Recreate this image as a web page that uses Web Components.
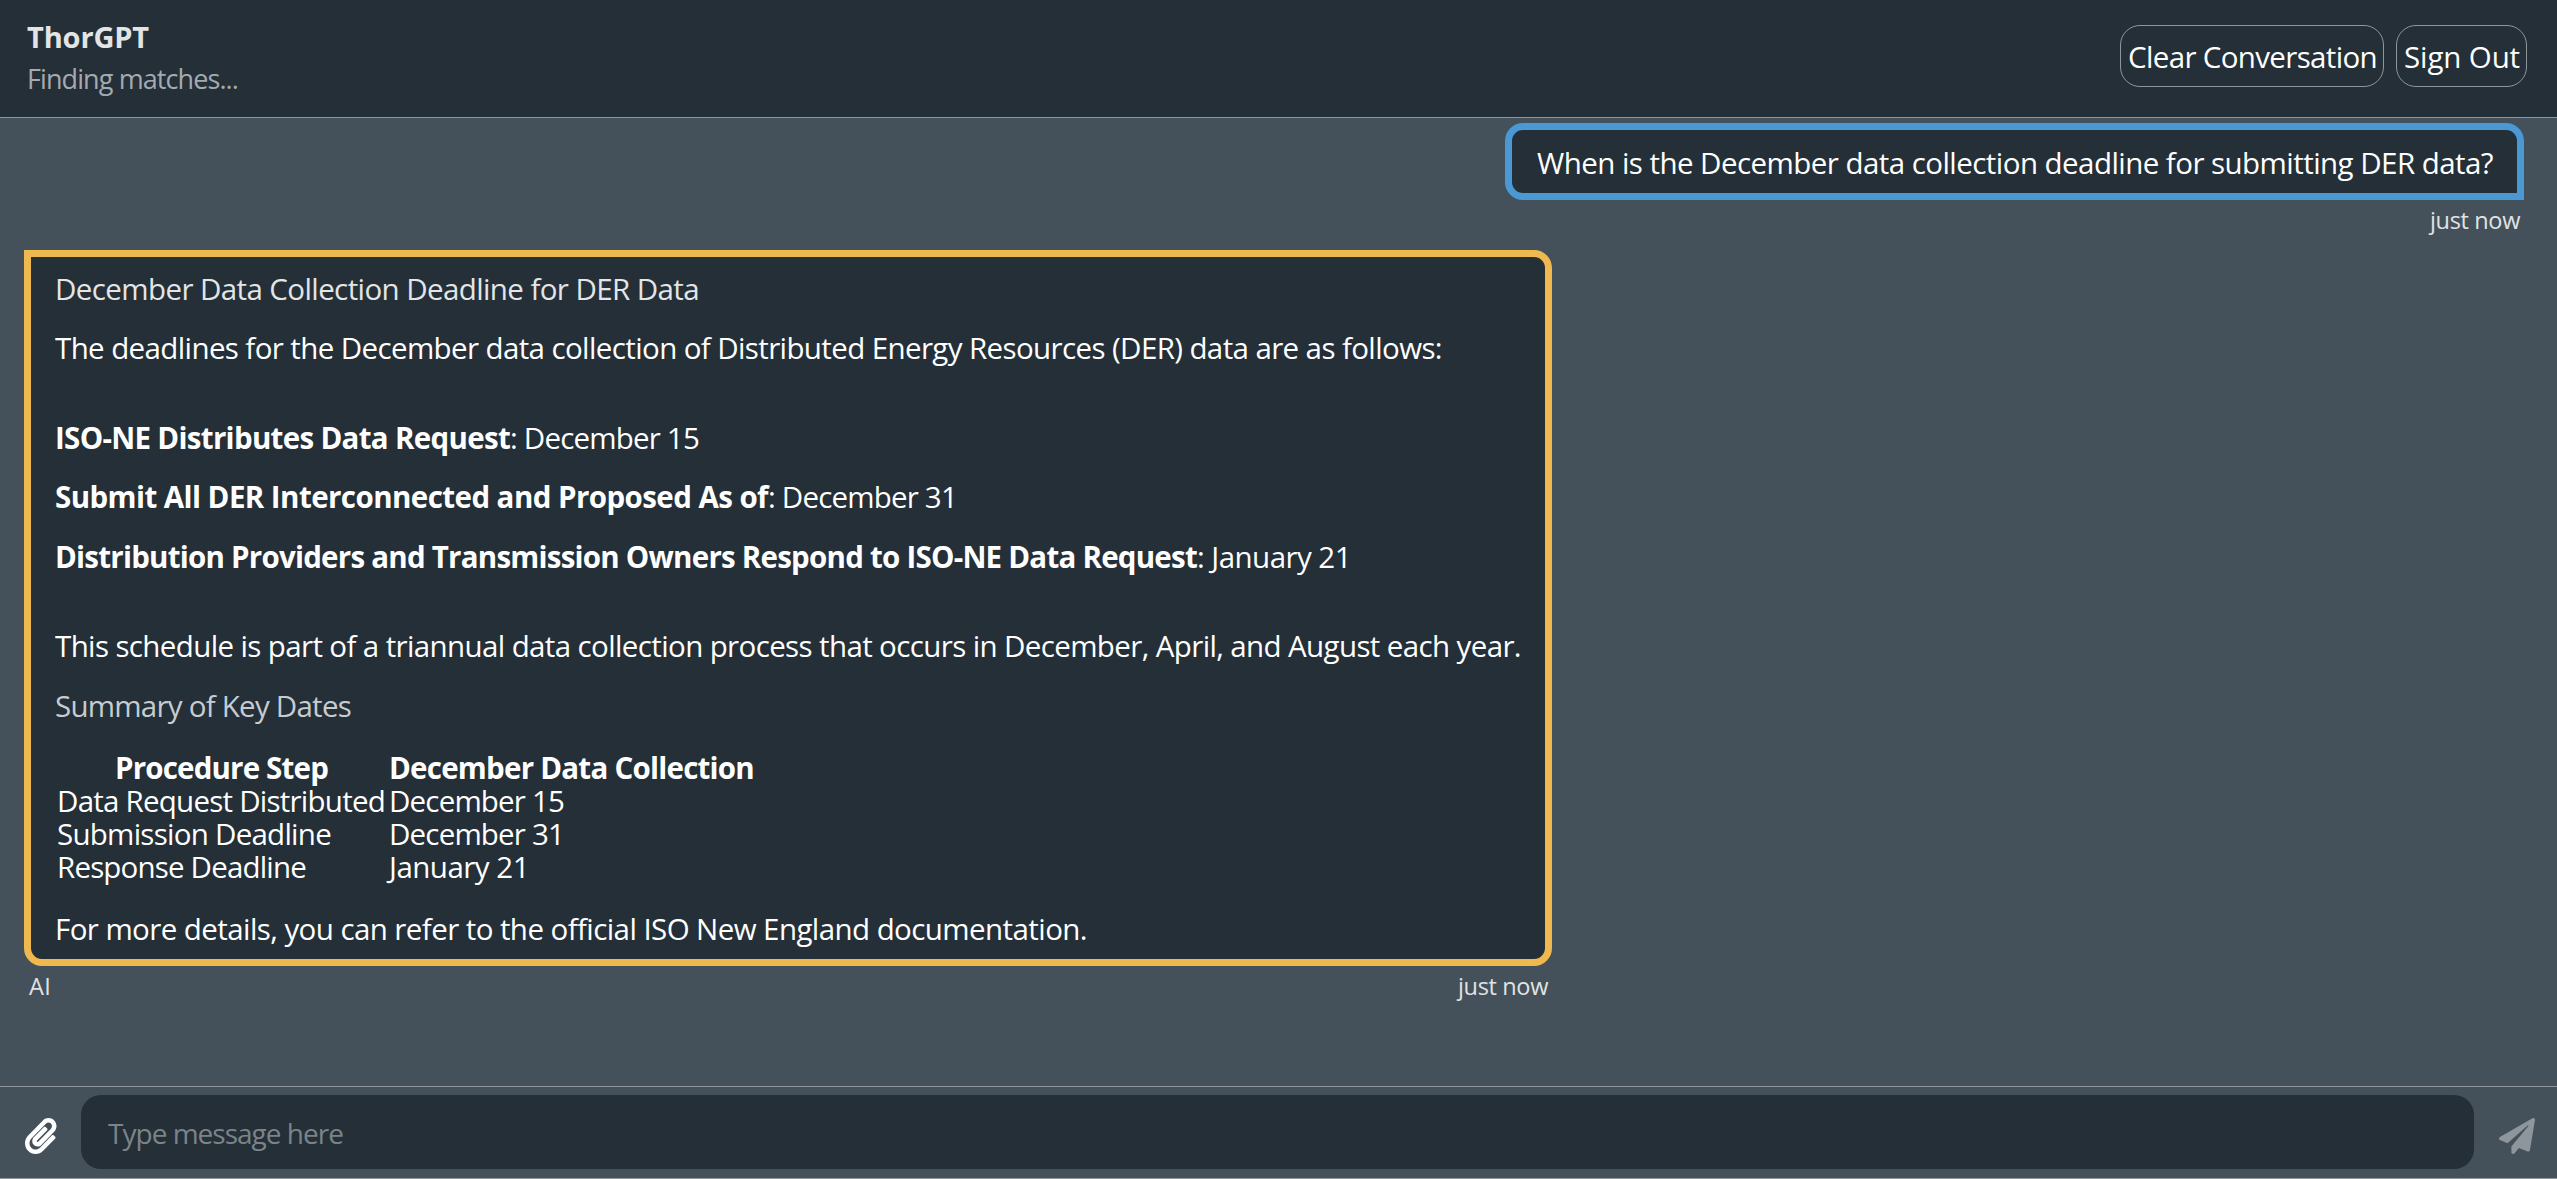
<!DOCTYPE html>
<html lang="en">
<head>
<meta charset="utf-8">
<title>ThorGPT</title>
<style>
  html, body { margin: 0; height: 100%; overflow: hidden; }
  body { background: #44515a; font-family: "Open Sans", "Noto Sans", sans-serif; font-size: 29.5px; line-height: 34px; color: #fff; }
</style>
</head>
<body>
<chat-app>
  <chat-header slot="header">
    <fit-text slot="title" w="122">ThorGPT</fit-text>
    <fit-text slot="status" w="211">Finding matches...</fit-text>
    <pill-button><fit-text w="249">Clear Conversation</fit-text></pill-button>
    <pill-button><fit-text w="116">Sign Out</fit-text></pill-button>
  </chat-header>

  <chat-message class="user">
    <fit-text w="956">When is the December data collection deadline for submitting DER data?</fit-text>
    <fit-text slot="time" w="90">just now</fit-text>
  </chat-message>

  <chat-message class="bot">
    <text-row tone="heading"><fit-text w="644">December Data Collection Deadline for DER Data</fit-text></text-row>
    <text-row style="margin-top:25px"><fit-text w="1387">The deadlines for the December data collection of Distributed Energy Resources (DER) data are as follows:</fit-text></text-row>
    <text-row style="margin-top:56px"><fit-text bold w="455">ISO-NE Distributes Data Request</fit-text><fit-text w="189">: December 15</fit-text></text-row>
    <text-row style="margin-top:25px"><fit-text bold w="713">Submit All DER Interconnected and Proposed As of</fit-text><fit-text w="189">: December 31</fit-text></text-row>
    <text-row style="margin-top:26px"><fit-text bold w="1142">Distribution Providers and Transmission Owners Respond to ISO-NE Data Request</fit-text><fit-text w="154">: January 21</fit-text></text-row>
    <text-row style="margin-top:55px"><fit-text w="1466">This schedule is part of a triannual data collection process that occurs in December, April, and August each year.</fit-text></text-row>
    <text-row tone="sub" style="margin-top:26px"><fit-text w="296">Summary of Key Dates</fit-text></text-row>
    <date-table>
      <fit-text bold class="th" w="213">Procedure Step</fit-text><fit-text bold w="365">December Data Collection</fit-text>
      <fit-text w="328">Data Request Distributed</fit-text><fit-text w="175">December 15</fit-text>
      <fit-text w="274">Submission Deadline</fit-text><fit-text w="175">December 31</fit-text>
      <fit-text w="249">Response Deadline</fit-text><fit-text w="140">January 21</fit-text>
    </date-table>
    <text-row><fit-text w="1032">For more details, you can refer to the official ISO New England documentation.</fit-text></text-row>
    <fit-text slot="sender" w="22">AI</fit-text>
    <fit-text slot="time" w="90">just now</fit-text>
  </chat-message>

  <message-input slot="footer"><fit-text w="235">Type message here</fit-text></message-input>
</chat-app>

<script>
const define = (name, html, setup) => customElements.define(name, class extends HTMLElement {
  constructor() {
    super();
    this.attachShadow({ mode: 'open' }).innerHTML = html.trim();
  }
  connectedCallback() { if (setup) setup.call(this); }
});

define('chat-app', `
<style>
  :host { display: flex; flex-direction: column; height: 100vh; box-sizing: border-box; border-bottom: 1px solid #8f979c; }
  main { flex: 1; min-height: 0; display: flex; flex-direction: column; padding: 5px 33px 0 24px; }
</style>
<slot name="header"></slot><main><slot></slot></main><slot name="footer"></slot>`);

define('chat-header', `
<style>
  :host { display: flex; justify-content: space-between; align-items: flex-start; height: 118px; box-sizing: border-box;
    padding: 20px 30px 0 26px; background: #242f38; border-bottom: 1px solid #8f979c; }
  .info { display: flex; flex-direction: column; gap: 8px; }
  .title { display: flex; font-weight: 700; font-size: 29px; color: #e3e4e6; height: 34px; padding-left: 1px; }
  .status { display: flex; font-size: 27px; color: #a5aaae; height: 34px; padding-left: 1px; }
  .actions { display: flex; gap: 12px; padding-top: 5px; }
</style>
<div class="info"><div class="title"><slot name="title"></slot></div><div class="status"><slot name="status"></slot></div></div>
<div class="actions"><slot></slot></div>`);

define('pill-button', `
<style>
  :host { display: block; }
  button { display: flex; align-items: center; height: 62px; padding: 1px 6px 0 7px; border: 1px solid #8f979c; border-radius: 20px;
    background: none; color: #fff; font: inherit; box-sizing: border-box; }
</style>
<button><slot></slot></button>`);

define('chat-message', `
<style>
  :host { display: flex; flex-direction: column; align-self: flex-start; }
  :host(.user) { align-self: flex-end; --edge: #4a98d4; --radius: 18px 18px 0 18px; --height: 77px; --pad: 16px 24px 0 25px; }
  :host(.bot) { margin-top: 14px; --edge: #efb94f; --radius: 0 18px 18px 18px; --height: 716px; --pad: 15px 24px 0; }
  .bubble { box-sizing: border-box; height: var(--height); border: 7px solid var(--edge); border-radius: var(--radius);
    padding: var(--pad); background: #242f38; }
  .meta { display: flex; justify-content: space-between; box-sizing: border-box; height: 36px; padding: 3px 4px 0 5px; font-size: 23.5px; color: #e0e3e5; }
  .meta > span { display: flex; }
</style>
<div class="bubble"><slot></slot></div>
<div class="meta"><span><slot name="sender"></slot></span><span><slot name="time"></slot></span></div>`);

define('text-row', `
<style>
  :host { display: flex; height: 34px; }
  :host([tone=heading]) { color: #e3e5e6; }
  :host([tone=sub]) { color: #c8cccf; }
</style>
<slot></slot>`);

define('date-table', `
<style>
  :host { display: grid; grid-template-columns: 332px max-content; grid-template-rows: 33px 33px 33px 34px; justify-items: start; margin: 28px 0 28px; padding-left: 2px; line-height: 33px; }
  ::slotted(.th) { justify-self: center; margin-right: 3px; }
</style>
<slot></slot>`);

define('message-input', `
<style>
  :host { display: flex; align-items: flex-start; height: 92px; box-sizing: border-box; border-top: 1px solid #8f979c; padding: 8px 22px 0 25px; }
  svg { display: block; height: 36px; margin-top: 23px; flex: none; }
  .clip { width: 31.5px; fill: #fff; }
  .send { width: 36px; fill: #8d959d; }
  .field { flex: 1; height: 74px; margin: 0 25px 0 24.5px; border-radius: 20px; background: #242f38; display: flex; align-items: center;
    box-sizing: border-box; padding: 1px 27px 0; font-size: 28px; color: #7c8388; }
</style>
<svg class="clip" viewBox="0 0 448 512"><path d="M43.246 466.142c-58.43-60.289-57.341-157.511 1.386-217.581L254.392 34c44.316-45.332 116.351-45.336 160.671 0 43.89 44.894 43.943 117.329 0 162.276L232.214 383.128c-29.855 30.537-78.633 30.111-107.982-.998-28.275-29.97-27.368-77.473 1.452-106.953l143.743-146.835c6.182-6.314 16.312-6.422 22.626-.241l22.861 22.379c6.315 6.182 6.422 16.312.241 22.626L171.427 319.927c-4.932 5.045-5.236 13.428-.648 18.292 4.372 4.634 11.245 4.711 15.688.165l182.849-186.851c19.613-20.062 19.613-52.725-.011-72.798-19.189-19.627-49.957-19.637-69.154 0L90.39 293.295c-34.763 35.56-35.299 93.12-1.191 128.313 34.01 35.093 88.985 35.137 123.058.286l172.06-175.999c6.177-6.319 16.307-6.433 22.626-.256l22.877 22.364c6.319 6.177 6.434 16.307.256 22.626l-172.06 175.998c-59.576 60.938-155.943 60.216-214.77-.485z"/></svg>
<div class="field"><slot></slot></div>
<svg class="send" viewBox="0 0 512 512"><path d="M476 3.2L12.5 270.6c-18.1 10.4-15.8 35.6 2.2 43.2L121 358.4l287.3-253.2c5.5-4.9 13.3 2.6 8.6 8.3L176 407v80.5c0 23.6 28.5 32.9 42.5 15.8L282 426l124.6 52.2c14.2 6 30.4-2.9 33-18.2l72-432C515 7.8 493.3-6.8 476 3.2z"/></svg>`);

// A run of text tracked so that its advance equals the "w" attribute, in pixels.
define('fit-text', `
<style>
  :host { display: inline-flex; font-kerning: normal; font-variant-ligatures: none; }
  :host([bold]) { font-weight: 700; }
  span { white-space: pre; }
</style><span><slot></slot></span>`, function () {
  const run = this.shadowRoot.querySelector('span');
  const natural = run.getBoundingClientRect().width;
  const target = Number(this.getAttribute('w'));
  run.style.letterSpacing = ((target - natural) / this.textContent.length).toFixed(4) + 'px';
});
</script>
</body>
</html>
